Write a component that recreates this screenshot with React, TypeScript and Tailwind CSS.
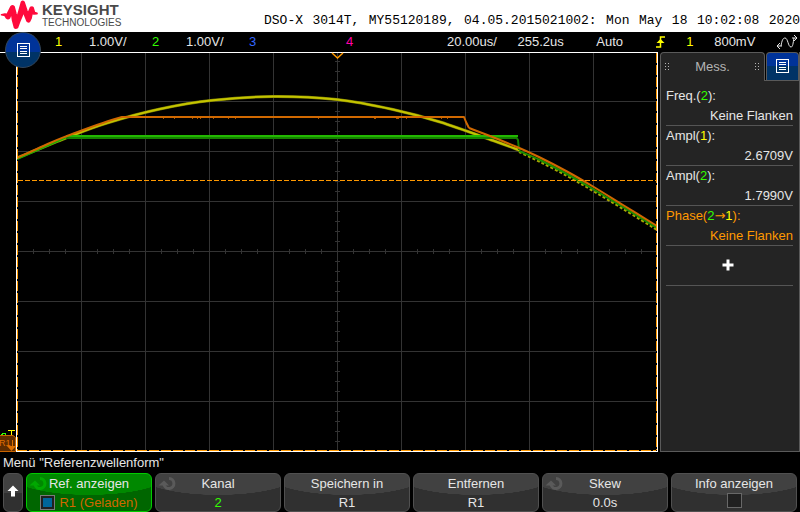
import React from "react";

const label = "font-['Liberation_Sans',Arial,sans-serif] text-[13px]";

function MenuIcon() {
  return (
    <svg width="13" height="15" viewBox="0 0 13 15" fill="none" stroke="#fff" shapeRendering="crispEdges" aria-hidden="true">
      <path d="M0.5 0.5h12v13h-12zM3 3.5h7M3 5.5h7M3 8.5h7M3 10.5h7" />
    </svg>
  );
}

function Logo() {
  return (
    <div className="flex items-start">
      <svg width="38" height="30" viewBox="0 0 38 30" aria-hidden="true">
        <path
          fill="#ff0a3c"
          stroke="#ff0a3c"
          strokeLinejoin="round"
          strokeWidth="1.6"
          d="M1.500 14.700L5 14l2 .5 1.500-3L11 6.500q1.500-1.200 3 0L16 14l1.200 3L19 11l2.500-9q1.200-1.300 2.500 0L27 11l1 2.500 2.500-6q1.500-1 2.500 0l1.500 5 2.500 .7v.6l-3 .2-2-.5-1 5-1.500 3q-1.500.8-2.500-.5L25 16l-1.500-4-1.500 4-2.500 6-2 5.500q-2 1.200-3 0L12.500 20 11.500 13 9.500 18q-1.500 1.500-3 0L5 15.500z"
        />
      </svg>
      <div className="flex flex-col pl-1 pt-[2px] font-['Liberation_Sans',Arial,sans-serif] text-[#4a4a4a]">
        <span className="text-[15px] font-bold leading-[15px]">KEYSIGHT</span>
        <span className="text-[10px] leading-3">TECHNOLOGIES</span>
      </div>
    </div>
  );
}

function Header() {
  return (
    <header className="flex h-8 shrink-0 justify-between bg-white">
      <Logo />
      <p className="w-[536px] whitespace-nowrap pt-3 font-['Liberation_Mono','Courier_New',monospace] text-[13px] leading-[18px] text-black [text-align-last:justify]">
        DSO-X 3014T, MY55120189, 04.05.2015021002: Mon May 18 10:02:08 2020
      </p>
    </header>
  );
}

const channels = [
  { id: "1", color: "text-[#ffff00]", scale: "1.00V/" },
  { id: "2", color: "text-[#33ff00]", scale: "1.00V/" },
  { id: "3", color: "text-[#3366ff]", scale: "" },
  { id: "4", color: "text-[#ff00aa]", scale: "" },
];

function StatusBar() {
  return (
    <div className={`flex h-5 shrink-0 items-center pl-[55px] leading-5 text-[#e6e6e6] ${label}`}>
      {channels.map((c) => (
        <div key={c.id} className="flex w-[97px]">
          <span className={`w-[34px] ${c.color}`}>{c.id}</span>
          <span>{c.scale}</span>
        </div>
      ))}
      <div className="flex flex-1 items-center justify-between pl-1 pr-[2px]">
        <span>20.00us/</span>
        <span>255.2us</span>
        <span className="px-3">Auto</span>
        <svg width="10" height="12" viewBox="0 0 10 12" fill="none" stroke="#ffff00" aria-hidden="true">
          <path strokeWidth="1.5" d="M0 11h4.5V1H9" />
          <path fill="#ffff00" stroke="none" d="M0.5 7L4.5 3l4 4z" />
        </svg>
        <span className="text-[#ffff00]">1</span>
        <span>800mV</span>
        <svg width="22" height="14" viewBox="0 0 22 14" fill="none" stroke="#e6e6e6" aria-hidden="true">
          <path d="M1 11h5M4 8l-3 3 3 3M5 11C6 5 7 3 9 3c3 0 3 9 6 9 2 0 2-4 3-9M16 3h5M18 0l3 3-3 3" />
        </svg>
      </div>
    </div>
  );
}

const columns = [81, 145, 209, 273, 337, 401, 465, 529, 593];
const rows = [101, 151, 201, 251, 301, 351, 401];
const xTicks = Array.from({ length: 39 }, (_, i) => 17 + (i + 1) * 16);
const yTicks = Array.from({ length: 39 }, (_, i) => 51 + (i + 1) * 10);

type Point = [number, number];

// Catmull-Rom spline through the sampled points
function smooth(points: Point[]) {
  let d = `M${points[0][0]} ${points[0][1]}`;
  for (let i = 0; i < points.length - 1; i++) {
    const a = points[Math.max(i - 1, 0)];
    const b = points[i];
    const c = points[i + 1];
    const e = points[Math.min(i + 2, points.length - 1)];
    d += `C${b[0] + (c[0] - a[0]) / 6} ${b[1] + (c[1] - a[1]) / 6} ${c[0] - (e[0] - b[0]) / 6} ${c[1] - (e[1] - b[1]) / 6} ${c[0]} ${c[1]}`;
  }
  return d;
}

const yellow = smooth([
  [17, 158], [67, 137.5], [107, 123], [160, 109], [213, 100.3], [273, 96.5],
  [337, 99.5], [393, 109.5], [440, 122], [493, 140.5], [520, 150.5],
]);
const tail = smooth([[519, 151], [540, 160], [567, 174], [593, 189], [623, 207], [657, 228]]);
const fringe = smooth([[519, 152], [540, 162], [567, 176], [593, 191], [623, 209], [657, 230]]);
const orange =
  smooth([[17, 158], [50, 143], [67, 136], [83, 130], [107, 121.5], [122, 117]]) +
  "L464 117L466 122L469 128" +
  smooth([[469, 128], [490, 136], [517, 147], [540, 157.5], [567, 171.5], [593, 186.5], [623, 205], [657, 226]]);

function Graticule() {
  return (
    <svg className="min-h-0 min-w-0 flex-1" viewBox="0 52 658 400" preserveAspectRatio="none" role="img" aria-label="Wellenform">
      <g stroke="#333" shapeRendering="crispEdges" fill="none">
        {columns.map((x) => (
          <path key={x} d={`M${x}.5 53V450`} />
        ))}
        {rows.map((y) => (
          <path key={y} d={`M18 ${y}.5H656`} />
        ))}
        {xTicks.map((x) => (
          <path key={x} d={`M${x}.5 249V254`} />
        ))}
        {yTicks.map((y) => (
          <path key={y} d={`M335 ${y}.5H340`} />
        ))}
      </g>
      <g fill="none" strokeLinejoin="round">
        <path d={yellow} stroke="#777700" strokeWidth="3" />
        <path d={yellow} stroke="#c4c400" strokeWidth="2" />
        <path d={fringe} stroke="#a8a800" strokeWidth="2" strokeDasharray="3 2" />
        <path d={smooth([[17, 159], [50, 144.5], [67, 137]])} stroke="#1faa00" strokeWidth="2" />
        <path d="M516 137L518 140L519 150" stroke="#158000" strokeWidth="2" />
        <path d={tail} stroke="#1a9000" strokeWidth="2" />
        <path d="M66 138H517" stroke="#158000" strokeWidth="2" />
        <path d="M66 136H518" stroke="#22b800" strokeWidth="2" />
        <path d={orange} stroke="#d06800" strokeWidth="2" />
        <path d="M163 118.500h1M174 118.500h1M192 118.500h1M197 118.500h1M200 118.500h1M213 118.500h1M228 118.500h1M235 118.500h1M318 118.500h1M374 118.500h2M396 118.500h3M406 118.500h1M441 118.500h1M447 118.500h1" stroke="#a85400" />
      </g>
      <g fill="none" shapeRendering="crispEdges">
        <path d="M18 180.5H656" stroke="#ff9900" strokeDasharray="5 2" />
        <path d="M17.5 53V450M656.5 53V450" stroke="#ff9900" strokeDasharray="10 2" />
        <path d="M17 450.5H656" stroke="#ff9900" strokeDasharray="10 2" />
        <path d="M0 52.5H658M16.5 52V452M657.5 52V452M16 451.5H658" stroke="#fff" />
      </g>
      <path d="M332 53l5.500 5 5.500-5" fill="none" stroke="#ff9900" strokeWidth="1.5" />
      <g fill="none" shapeRendering="crispEdges">
        <path d="M2 433.500h4M1 434.500h2M5.500 433v3M0 435.500h3" stroke="#33ff00" />
        <path d="M8 430.500h7M11.500 430v6" stroke="#ffff00" />
      </g>
      <path d="M0 435.500h13l2.500 2v14H0" fill="#5e2c00" stroke="#c86400" />
      <text x="-1" y="446" fontSize="9" fill="#e07000" fontFamily="Liberation Sans, sans-serif">R1</text>
      <path d="M12.500 440v6" stroke="#e07000" />
      <path d="M7 446h9l-4.500 5z" fill="#e07000" />
    </svg>
  );
}

function Ch({ n }: { n: 1 | 2 }) {
  return <span className={n === 1 ? "text-[#ffff00]" : "text-[#33ff00]"}>{n}</span>;
}

function Measurement({ name, value, active }: { name: React.ReactNode; value: string; active?: boolean }) {
  return (
    <div className={`flex h-10 flex-col border-b border-[#555] ${active ? "text-[#ff9900]" : "text-[#e6e6e6]"}`}>
      <dt className="leading-5">{name}</dt>
      <dd className="text-right leading-5">{value}</dd>
    </div>
  );
}

function Grip() {
  return (
    <svg width="5" height="8" viewBox="0 0 5 8" fill="#b4b4b4" shapeRendering="crispEdges" aria-hidden="true">
      <path d="M0 0h1v1H0zM3 0h1v1H3zM0 3h1v1H0zM3 3h1v1H3zM0 6h1v1H0zM3 6h1v1H3z" />
    </svg>
  );
}

function SidePanel() {
  return (
    <aside className={`ml-[2px] flex w-[140px] shrink-0 flex-col ${label}`}>
      <div className="flex h-[29px]">
        <h2 className="flex w-[105px] items-center justify-between rounded-t border border-b-0 border-[#5a5a5a] bg-[#242424] px-1 text-[#b4b4b4]">
          <Grip />
          Mess.
          <Grip />
        </h2>
        <div className="flex flex-1 border-b border-r border-[#5a5a5a] pl-px">
          <button aria-label="Messmenü" className="flex flex-1 items-center justify-center rounded-t border border-b-0 border-[#5a5a5a] bg-linear-to-b from-[#003399] from-50% to-[#003366] to-50%">
            <MenuIcon />
          </button>
        </div>
      </div>
      <div className="flex-1 border border-t-0 border-[#5a5a5a] bg-[#242424] pl-[5px] pr-[6px] pt-[5px]">
        <dl>
          <Measurement name={<>Freq.(<Ch n={2} />):</>} value="Keine Flanken" />
          <Measurement name={<>Ampl(<Ch n={1} />):</>} value="2.6709V" />
          <Measurement name={<>Ampl(<Ch n={2} />):</>} value="1.7990V" />
          <Measurement
            active
            name={
              <>
                Phase(<Ch n={2} />
                <span className="font-['DejaVu_Sans',sans-serif]">→</span>
                <Ch n={1} />):
              </>
            }
            value="Keine Flanken"
          />
        </dl>
        <button aria-label="Messung hinzufügen" className="flex h-10 w-full items-center justify-center border-b border-[#555] pb-px pr-[3px]">
          <svg width="12" height="12" viewBox="0 0 12 12" stroke="#fff" strokeWidth="3" aria-hidden="true">
            <path d="M6 0.500v11M0.500 6h11" />
          </svg>
        </button>
      </div>
    </aside>
  );
}

function Knob({ color }: { color: string }) {
  return (
    <svg className="absolute left-[2px] top-[2px]" width="20" height="16" viewBox="0 0 20 16" fill="none" aria-hidden="true">
      <path d="M11 2.500a5 5 0 1 1 -5 6" stroke={color} strokeWidth="3" />
      <path d="M0.500 9.500l5.500-5 5 5z" fill={color} />
    </svg>
  );
}

const gray =
  "border-[#505050] bg-[radial-gradient(80px_21px_at_50%_0,#414141_99%,#303030_100%)] text-[#e6e6e6]";
const green =
  "border-[#00cc00] bg-[radial-gradient(80px_21px_at_50%_0,#008800_99%,#006600_100%)] text-[#e6e6e6]";
const key = "relative flex h-[39px] min-w-0 flex-1 flex-col items-center rounded-md border leading-[19px]";

function SoftKeys() {
  return (
    <nav aria-label="Referenzwellenform" className={`flex shrink-0 gap-[3px] px-[3px] pt-px ${label}`}>
      <button aria-label="Zurück" className="flex w-5 items-center justify-center rounded-md border border-[#505050] bg-linear-to-b from-[#414141] from-50% to-[#303030] to-50% pb-1">
        <svg width="12" height="12" viewBox="0 0 12 12" fill="#fff" aria-hidden="true">
          <path d="M6 0.500l5.500 5.500H8v5.500H4V6H0.500z" />
        </svg>
      </button>
      <label className={`${key} ${green}`}>
        <Knob color="#00a800" />
        <span>Ref. anzeigen</span>
        <span className="flex items-center gap-1 text-[#d06800]">
          <input type="checkbox" defaultChecked className="size-[15px] appearance-none border border-[#7a7a7a] bg-[#202020] checked:bg-[#006699] checked:shadow-[inset_0_0_0_2px_#202020]" />
          R1 (Geladen)
        </span>
      </label>
      <button className={`${key} ${gray}`}>
        <Knob color="#5a5a5a" />
        <span>Kanal</span>
        <span className="text-[#33ff00]">2</span>
      </button>
      <button className={`${key} ${gray}`}>
        <span>Speichern in</span>
        <span>R1</span>
      </button>
      <button className={`${key} ${gray}`}>
        <span>Entfernen</span>
        <span>R1</span>
      </button>
      <button className={`${key} ${gray}`}>
        <Knob color="#5a5a5a" />
        <span>Skew</span>
        <span>0.0s</span>
      </button>
      <label className={`${key} ${gray}`}>
        <span>Info anzeigen</span>
        <input type="checkbox" className="size-[15px] appearance-none border border-[#686868] bg-[#202020]" />
      </label>
    </nav>
  );
}

export default function App() {
  return (
    <div className="relative flex h-screen flex-col bg-black">
      <Header />
      <StatusBar />
      <main className="flex min-h-0 flex-1">
        <Graticule />
        <SidePanel />
      </main>
      <p className={`h-5 shrink-0 pl-[3px] leading-[22px] text-[#e6e6e6] ${label}`}>Menü "Referenzwellenform"</p>
      <SoftKeys />
      <button
        aria-label="Hauptmenü"
        className="absolute left-[5px] top-8 flex size-9 items-center justify-center rounded-full border border-[#33475c] bg-linear-to-b from-[#003399] from-55% to-[#003366] to-55%"
      >
        <MenuIcon />
      </button>
    </div>
  );
}
